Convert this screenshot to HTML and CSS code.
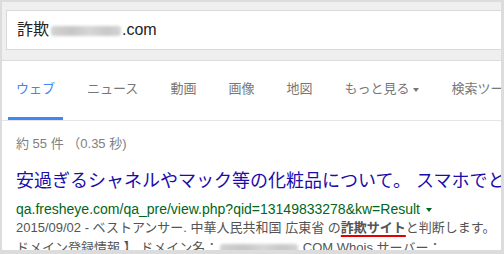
FILE: index.html
```html
<!DOCTYPE html>
<html lang="ja">
<head>
  <meta charset="UTF-8" />
  <title>詐欺 - 検索</title>
  <link rel="stylesheet" href="styles.css">
</head>
<body>

  <div class="frame">
    <div class="searchbar">
      <div class="searchbox">詐欺<span class="blur"></span>.com</div>
    </div>

    <ul class="tabs">
      <li class="tab active">ウェブ</li>
      <li class="tab">ニュース</li>
      <li class="tab">動画</li>
      <li class="tab">画像</li>
      <li class="tab">地図</li>
      <li class="tab">もっと見る<span class="caret"></span></li>
      <li class="tab">検索ツール</li>
    </ul>

    <div class="results">
      <div class="stats">約 55 件 （0.35 秒)</div>

      <div class="result">
        <h3 class="title"><a href="#">安過ぎるシャネルやマック等の化粧品について。 スマホでと</a></h3>
        <div class="url">qa.fresheye.com/qa_pre/view.php?qid=13149833278&amp;kw=Result<span class="caret green"></span></div>
        <div class="snippet">
          2015/09/02 - ベストアンサー. 中華人民共和国 広東省 の<b class="mark">詐欺サイト</b>と判断します。<br>
          ドメイン登録情報 】 ドメイン名：<span class="blur wide"></span>.COM Whois サーバー：
        </div>
      </div>
    </div>
  </div>

</body>
</html>
```

FILE: styles.css
```css
body {
  margin: 0;
  background: #fff;
  font-family: "Liberation Sans", "Noto Sans CJK JP", sans-serif;
}

.frame {
  width: 504px;
  height: 254px;
  box-sizing: border-box;
  border: solid #dcdcdc;
  border-width: 2px 3px 4px 2px;
  overflow: hidden;
  background: #fff;
}

.searchbar {
  background: #efefef;
  padding: 8px 0 10px 4px;
  border-bottom: 1px solid #dcdcdc;
}

.searchbox {
  height: 38px;
  line-height: 38px;
  background: #fff;
  border: 1px solid #d9d9d9;
  border-right: none;
  padding-left: 10px;
  font-size: 16px;
  color: #222;
  white-space: nowrap;
}

/* blurred-out domain name */
.blur {
  display: inline-block;
  width: 70px;
  height: 10px;
  margin: 0 1px 0 2px;
  background: linear-gradient(90deg, #d2d2d2, #c6c6c6 30%, #d6d6d6 55%, #c8c8c8 80%, #d4d4d4);
  border-radius: 3px;
  filter: blur(1.5px);
  vertical-align: -1px;
}

.blur.wide {
  width: 78px;
  height: 9px;
}

.tabs {
  list-style: none;
  margin: 0;
  padding: 0 0 0 6px;
  display: flex;
  border-bottom: 1px solid #e5e5e5;
  white-space: nowrap;
}

.tab {
  padding: 20px 8px;
  margin-right: 16px;
  line-height: 16px;
  font-size: 13px;
  color: #777;
  border-bottom: 3px solid transparent;
}

.tab.active {
  color: #4285f4;
  border-bottom-color: #4285f4;
}

.caret {
  display: inline-block;
  margin-left: 4px;
  border-left: 3.5px solid transparent;
  border-right: 3.5px solid transparent;
  border-top: 4px solid #777;
  vertical-align: middle;
}

.results {
  padding: 15px 0 0 14px;
}

.stats {
  font-size: 13px;
  line-height: 16px;
  color: #808080;
}

.title {
  margin: 18px 0 0;
  font-size: 18px;
  font-weight: normal;
  line-height: 22px;
  white-space: nowrap;
}

.title a {
  color: #1a0dab;
  text-decoration: none;
}

.url {
  margin-top: 8px;
  font-size: 14px;
  line-height: 18px;
  color: #006621;
  white-space: nowrap;
}

.caret.green {
  margin-left: 6px;
  border-top-color: #006621;
}

.snippet {
  font-size: 13px;
  line-height: 20px;
  color: #545454;
  white-space: nowrap;
}

.mark {
  text-decoration: underline;
  text-decoration-color: #e50000;
  text-decoration-thickness: 2px;
  text-underline-offset: 3px;
}
```
